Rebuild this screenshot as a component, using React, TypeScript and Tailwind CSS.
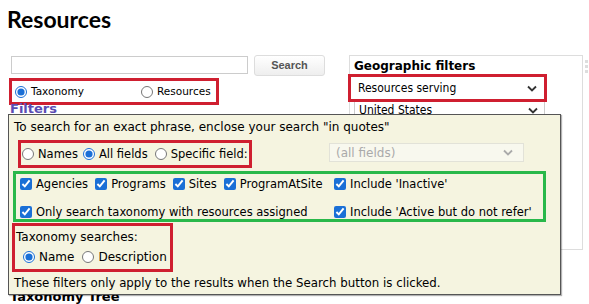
import React from "react";

const sans = "font-['DejaVu_Sans','Verdana',sans-serif]";

const Radio = ({ checked, label, className = "" }: { checked?: boolean; label: string; className?: string }) => (
	<label className={`flex items-center gap-[4px] whitespace-nowrap ${className}`}>
		<input type="radio" defaultChecked={checked} className="m-0 h-[12px] w-[12px] accent-[#1a6fd6]" />
		<span>{label}</span>
	</label>
);

const Check = ({ label, className = "" }: { label: string; className?: string }) => (
	<label className={`flex items-center gap-[4px] whitespace-nowrap ${className}`}>
		<input type="checkbox" defaultChecked className="m-0 h-[12px] w-[12px] accent-[#1a6fd6]" />
		<span>{label}</span>
	</label>
);

const Chevron = ({ color = "#333" }: { color?: string }) => (
	<svg width="10" height="7" viewBox="0 0 10 7" fill="none">
		<path d="M1 1.5 L5 5.5 L9 1.5" stroke={color} strokeWidth="1.8" />
	</svg>
);

export default function App() {
	return (
		<div className="relative h-[304px] w-[589px] overflow-hidden bg-white text-black">
			<h1 className="ml-[7px] pt-[6px] font-['Lato',sans-serif] text-[23px] font-bold leading-[26px]">
				Resources
			</h1>

			<div className="mt-[23px] flex">
				{/* left column */}
				<div className="w-[349px]">
					<div className="flex items-start">
						<input className="ml-[11px] mt-[1px] h-[18px] w-[237px] border border-[#ccc] bg-white" />
						<button className="ml-[6px] h-[21px] w-[71px] rounded-[3px] border border-[#ddd] bg-gradient-to-b from-white to-[#eee] font-['Liberation_Sans',sans-serif] text-[11px] font-bold text-[#555]">
							Search
						</button>
					</div>
					<div className={`ml-[9px] mt-[2px] flex h-[27px] w-[210px] items-center border-[3px] border-[#cf1f30] pl-[3px] ${sans} text-[10.5px]`}>
						<Radio checked label="Taxonomy" className="w-[126px]" />
						<Radio label="Resources" />
					</div>
					<div className={`ml-[10px] -mt-[4px] ${sans} text-[13px] font-bold leading-[16px] text-[#5b4db3]`}>Filters</div>
					<div className="h-[172px]" />
					<div className={`ml-[10px] ${sans} text-[13px] font-bold leading-[16px]`}>Taxonomy Tree</div>
				</div>

				{/* geographic filters */}
				<div className={`h-[195px] w-[234px] border border-[#ddd] ${sans}`}>
					<div className="ml-[4px] mt-[3px] text-[12px] font-bold leading-[15px]">Geographic filters</div>
					<div className="-ml-[2px] flex h-[28px] w-[199px] items-center justify-between border-[3px] border-[#cf1f30] pl-[7px] pr-[7px] text-[12px] font-stretch-condensed">
						<span>Resources serving</span>
						<Chevron />
					</div>
					<div className="ml-[4px] flex h-[17px] w-[191px] items-center justify-between border-x border-b border-[#ccc] pl-[4px] pr-[6px] text-[12px] font-stretch-condensed">
						<span>United States</span>
						<Chevron />
					</div>
				</div>
				<div className="ml-[2px] mt-[5px] flex flex-col gap-[2px]">
					<div className="h-[3px] w-[3px] bg-[#ddd]" />
					<div className="h-[3px] w-[3px] bg-[#ddd]" />
					<div className="h-[3px] w-[3px] bg-[#ddd]" />
				</div>
			</div>

			{/* filters popup */}
			<div className={`absolute left-[8px] top-[114px] h-[181px] w-[553px] border border-[#555] bg-[#f5f4e0] shadow-[1px_1px_1px_rgba(0,0,0,0.3)] ${sans} text-[12px] leading-[16px]`}>
				<div className="ml-[5px] mt-[4px]">To search for an exact phrase, enclose your search "in quotes"</div>
				<div className="mt-[5px] flex items-start">
					<div className="ml-[9px] flex h-[28px] w-[234px] items-center gap-[5px] border-[3px] border-[#cf1f30] pl-[1px] text-[11.5px]">
						<Radio label="Names" />
						<Radio checked label="All fields" />
						<Radio label="Specific field:" className="ml-[2px]" />
					</div>
					<div className="ml-[77px] mt-[3px] flex h-[19px] w-[195px] items-center justify-between border border-[#e2e2d8] bg-[#f8f8ee] pl-[6px] pr-[10px] text-[#aaa]">
						<span>(all fields)</span>
						<Chevron color="#aaa" />
					</div>
				</div>
				<div className="ml-[4px] mt-[3px] grid h-[51px] w-[533px] grid-cols-[314px_1fr] content-start gap-y-[10px] border-[3px] border-[#29b84a] pl-[4px] pt-[1px] text-[11.5px]">
					<div className="flex h-[18px] items-center gap-[7px]">
						<Check label="Agencies" />
						<Check label="Programs" />
						<Check label="Sites" />
						<Check label="ProgramAtSite" />
					</div>
					<Check label="Include 'Inactive'" className="h-[18px]" />
					<Check label="Only search taxonomy with resources assigned" className="h-[18px]" />
					<Check label="Include 'Active but do not refer'" className="h-[18px]" />
				</div>
				<div className="ml-[3px] mt-[1px] flex h-[49px] w-[161px] flex-col border-[3px] border-[#cf1f30] pl-[1px]">
					<div className="mt-[3px]">Taxonomy searches:</div>
					<div className="mt-[4px] flex items-center gap-[8px] pl-[7px]">
						<Radio checked label="Name" />
						<Radio label="Description" />
					</div>
				</div>
				<div className="ml-[5px] mt-[3px] text-[11.8px]">These filters only apply to the results when the Search button is clicked.</div>
			</div>
		</div>
	);
}
